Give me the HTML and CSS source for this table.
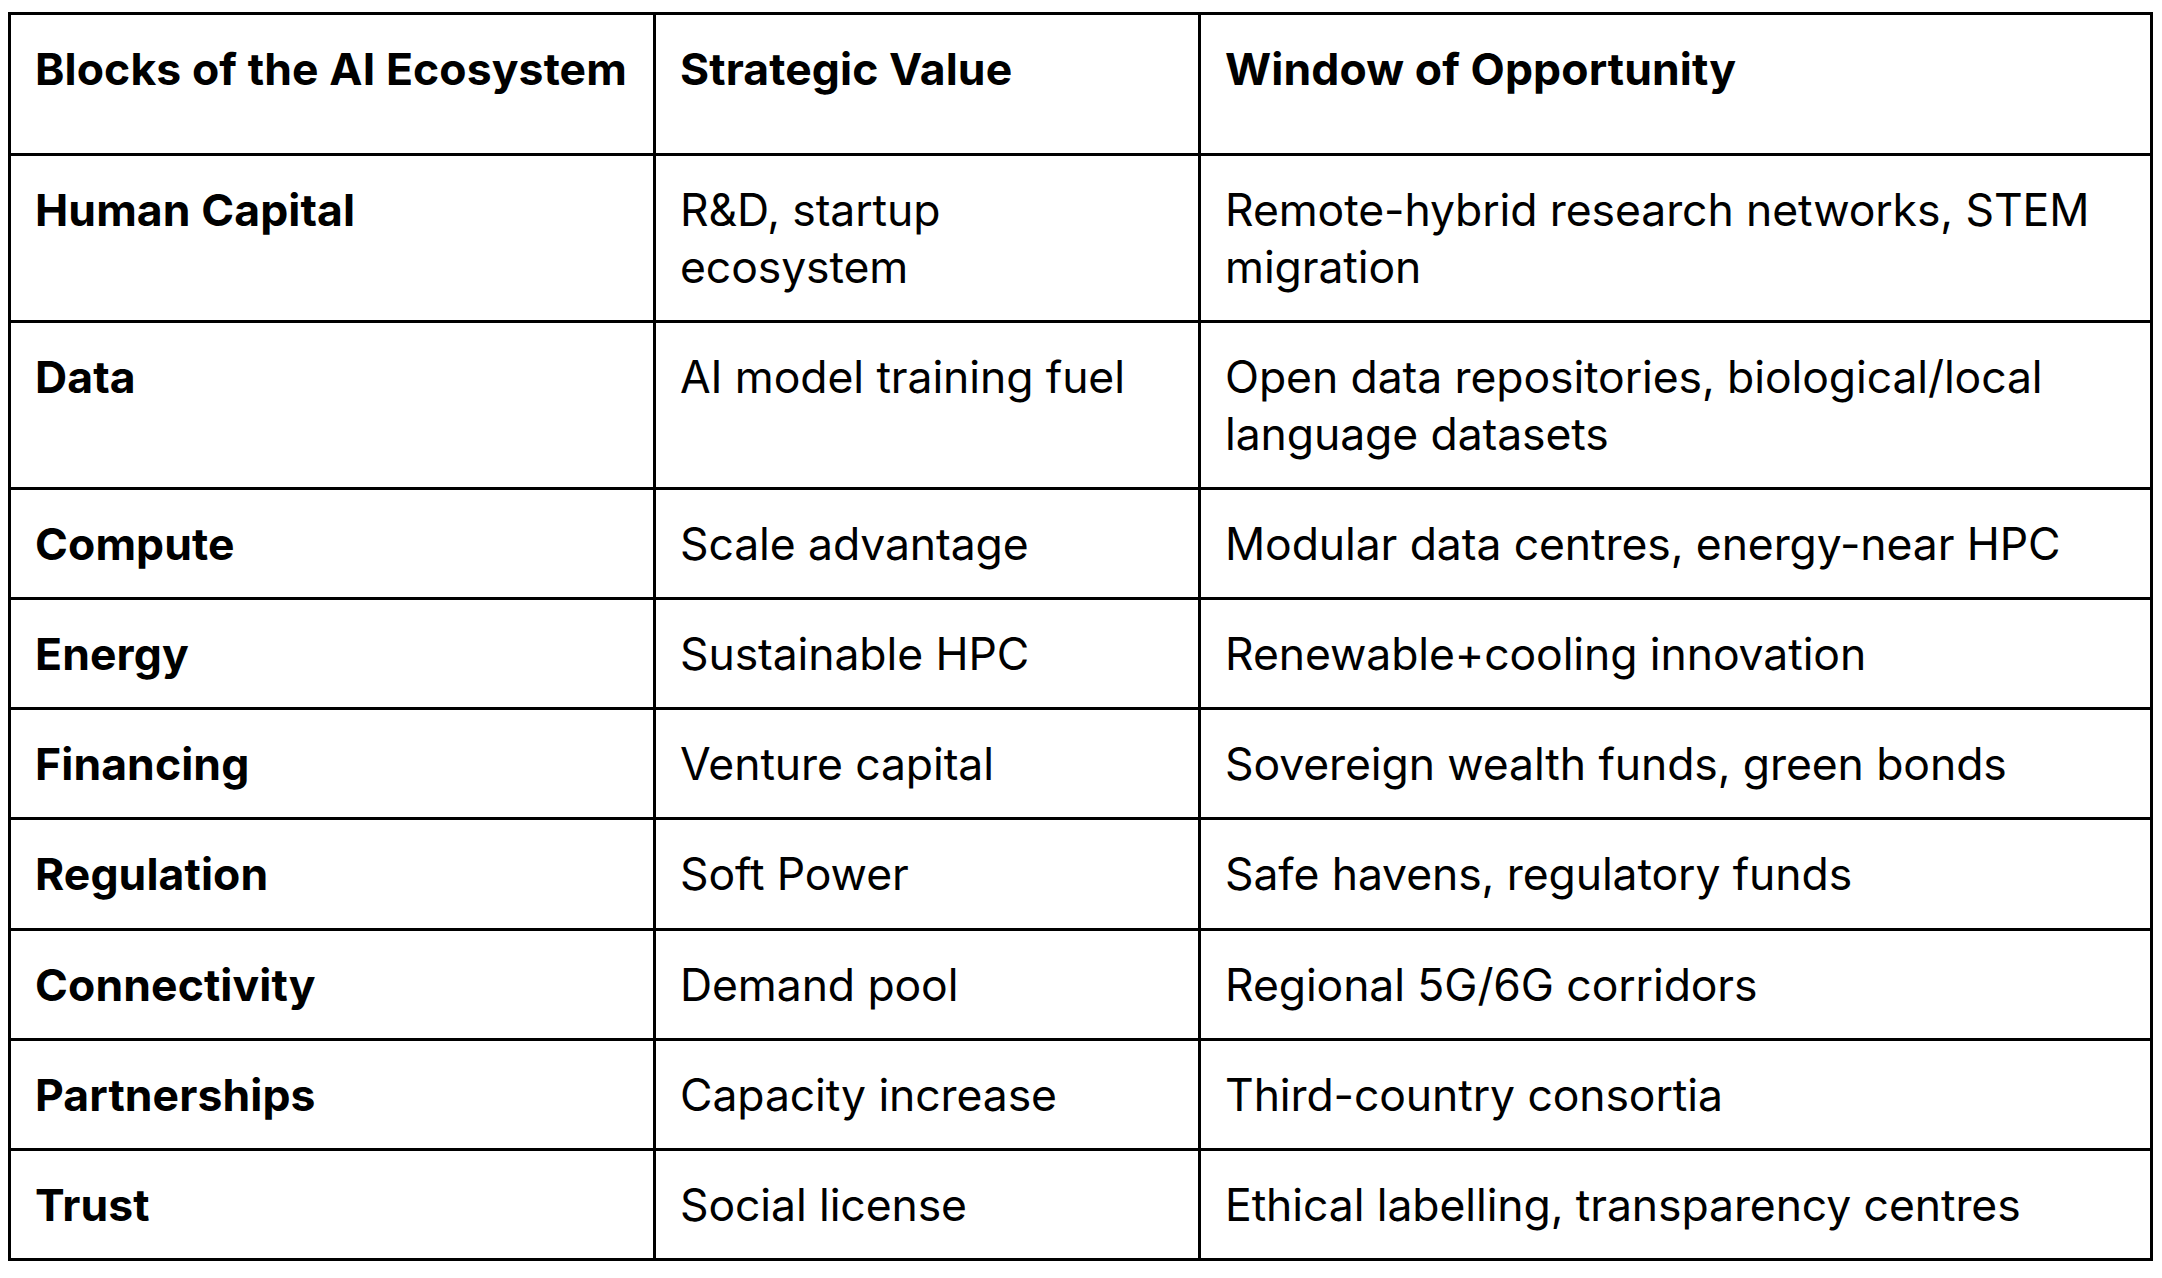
FILE: index.html
```html
<!DOCTYPE html>
<html lang="en">
<head>
<meta charset="utf-8">
<title>Blocks of the AI Ecosystem</title>
<link rel="stylesheet" href="styles.css">
</head>
<body>
<table class="eco-table">
  <colgroup>
    <col class="col-block">
    <col class="col-value">
    <col class="col-window">
  </colgroup>
  <thead>
    <tr class="head-row">
      <th>Blocks of the AI Ecosystem</th>
      <th>Strategic Value</th>
      <th>Window of Opportunity</th>
    </tr>
  </thead>
  <tbody>
    <tr><th>Human Capital</th><td>R&amp;D, startup ecosystem</td><td>Remote-hybrid research networks, STEM migration</td></tr>
    <tr><th>Data</th><td>AI model training fuel</td><td>Open data repositories, biological/local language datasets</td></tr>
    <tr><th>Compute</th><td>Scale advantage</td><td>Modular data centres, energy-near HPC</td></tr>
    <tr><th>Energy</th><td>Sustainable HPC</td><td>Renewable+cooling innovation</td></tr>
    <tr><th>Financing</th><td>Venture capital</td><td>Sovereign wealth funds, green bonds</td></tr>
    <tr><th>Regulation</th><td>Soft Power</td><td>Safe havens, regulatory funds</td></tr>
    <tr><th>Connectivity</th><td>Demand pool</td><td>Regional 5G/6G corridors</td></tr>
    <tr><th>Partnerships</th><td>Capacity increase</td><td>Third-country consortia</td></tr>
    <tr><th>Trust</th><td>Social license</td><td>Ethical labelling, transparency centres</td></tr>
  </tbody>
</table>
</body>
</html>
```
FILE: styles.css
```css
html, body {
  margin: 0;
  padding: 0;
  background: #ffffff;
}

body {
  padding: 12px 0 0 8px;
  font-family: "Inter", "Liberation Sans", sans-serif;
  color: #000;
}

.eco-table {
  border-collapse: collapse;
  table-layout: fixed;
  width: 2142px;
  font-size: 44.5px;
  line-height: 57px;
  letter-spacing: -0.1px;
}

.col-block { width: 645px; }
.col-value { width: 545px; }
.col-window { width: 952px; }

.eco-table th,
.eco-table td {
  border: 3px solid #000;
  padding: 26px 24px 24.2px 24px;
  text-align: left;
  vertical-align: top;
}

.eco-table th {
  font-weight: 700;
  letter-spacing: 0.1px;
}

.eco-table td {
  font-weight: 400;
}

.head-row th {
  padding-bottom: 54.5px;
}
```
